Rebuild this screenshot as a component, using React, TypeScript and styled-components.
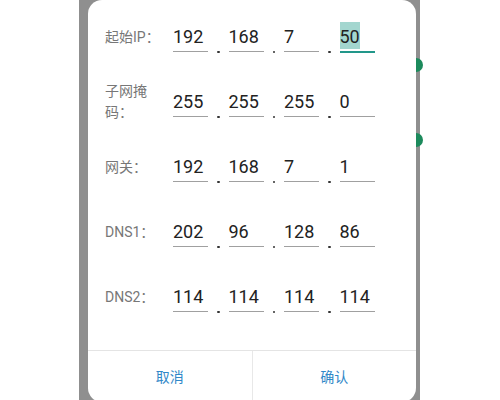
import styled, { createGlobalStyle } from 'styled-components'

const GlobalStyle = createGlobalStyle`
  html, body {
    margin: 0;
    padding: 0;
    background: #ffffff;
    overflow: hidden;
  }
  body {
    font-family: Roboto, "Noto Sans CJK SC", sans-serif;
  }
`

const Page = styled.div`
  display: flex;
  width: 500px;
  height: 400px;
  overflow: hidden;
  background: #ffffff;
`

const Side = styled.div<{ $width: number }>`
  width: ${(p) => p.$width}px;
  flex: none;
`

const Backdrop = styled.div`
  position: relative;
  width: 341px;
  flex: none;
  background: #8f8f8f;
  padding-left: 9px;
  box-sizing: border-box;
`

const PeekDot = styled.div<{ $top: number }>`
  position: absolute;
  right: -3px;
  top: ${(p) => p.$top}px;
  width: 14px;
  height: 14px;
  border-radius: 50%;
  background: #1c8a5c;
`

const Dialog = styled.div`
  position: relative;
  z-index: 1;
  width: 328px;
  height: 402px;
  background: #ffffff;
  border-radius: 14px;
  display: flex;
  flex-direction: column;
  overflow: hidden;
`

const Form = styled.div`
  padding: 6px 0 0 17px;
  display: flex;
  flex-direction: column;
  flex: 1;
`

const Row = styled.div`
  display: flex;
  align-items: center;
  height: 65px;
`

const Label = styled.div`
  width: 55px;
  margin-right: 13px;
  padding-bottom: 3px;
  font-size: 14px;
  line-height: 21px;
  color: #777777;
`

const Field = styled.div<{ $focused?: boolean }>`
  width: 35px;
  box-sizing: border-box;
  padding: 0 0 2px 0;
  font-size: 18px;
  line-height: 24px;
  height: ${(p) => (p.$focused ? 28 : 27.5)}px;
  color: #222222;
  border-bottom: ${(p) => (p.$focused ? '2px solid #22978a' : '1.5px solid #a0a0a0')};
`

const Selected = styled.span`
  display: inline-block;
  background: #a3d6cf;
  padding-top: 3px;
  margin-top: -3px;
  vertical-align: top;
`

const Separator = styled.div`
  width: 20.5px;
  align-self: stretch;
  display: flex;
  justify-content: center;
  align-items: center;
  padding-top: 27px;
  box-sizing: border-box;

  &::after {
    content: '';
    width: 2.5px;
    height: 2.5px;
    border-radius: 50%;
    background: #333333;
  }
`

const Footer = styled.div`
  display: flex;
  height: 51px;
  border-top: 1px solid #e4e4e4;
`

const Action = styled.div`
  flex: 1;
  display: flex;
  align-items: center;
  justify-content: center;
  padding-bottom: 1px;
  font-family: "Noto Sans CJK SC", sans-serif;
  font-size: 14px;
  color: #3188c8;

  & + & {
    border-left: 1px solid #e8e8e8;
  }
`

type Entry = { label: string; parts: string[]; focus?: number }

const entries: Entry[] = [
  { label: '起始IP：', parts: ['192', '168', '7', '50'], focus: 3 },
  { label: '子网掩码：', parts: ['255', '255', '255', '0'] },
  { label: '网关：', parts: ['192', '168', '7', '1'] },
  { label: 'DNS1：', parts: ['202', '96', '128', '86'] },
  { label: 'DNS2：', parts: ['114', '114', '114', '114'] },
]

const IpRow = ({ label, parts, focus }: Entry) => (
  <Row>
    <Label>{label}</Label>
    {parts.map((part, i) => (
      <span key={i} style={{ display: 'contents' }}>
        {i > 0 && <Separator />}
        <Field $focused={i === focus}>
          {i === focus ? <Selected>{part}</Selected> : part}
        </Field>
      </span>
    ))}
  </Row>
)

const App = () => {
  return (
    <Page>
      <GlobalStyle />
      <Side $width={79} />
      <Backdrop>
        <PeekDot $top={58} />
        <PeekDot $top={133} />
        <Dialog>
          <Form>
            {entries.map((e) => (
              <IpRow key={e.label} {...e} />
            ))}
          </Form>
          <Footer>
            <Action>取消</Action>
            <Action>确认</Action>
          </Footer>
        </Dialog>
      </Backdrop>
      <Side $width={80} />
    </Page>
  )
}

export default App
